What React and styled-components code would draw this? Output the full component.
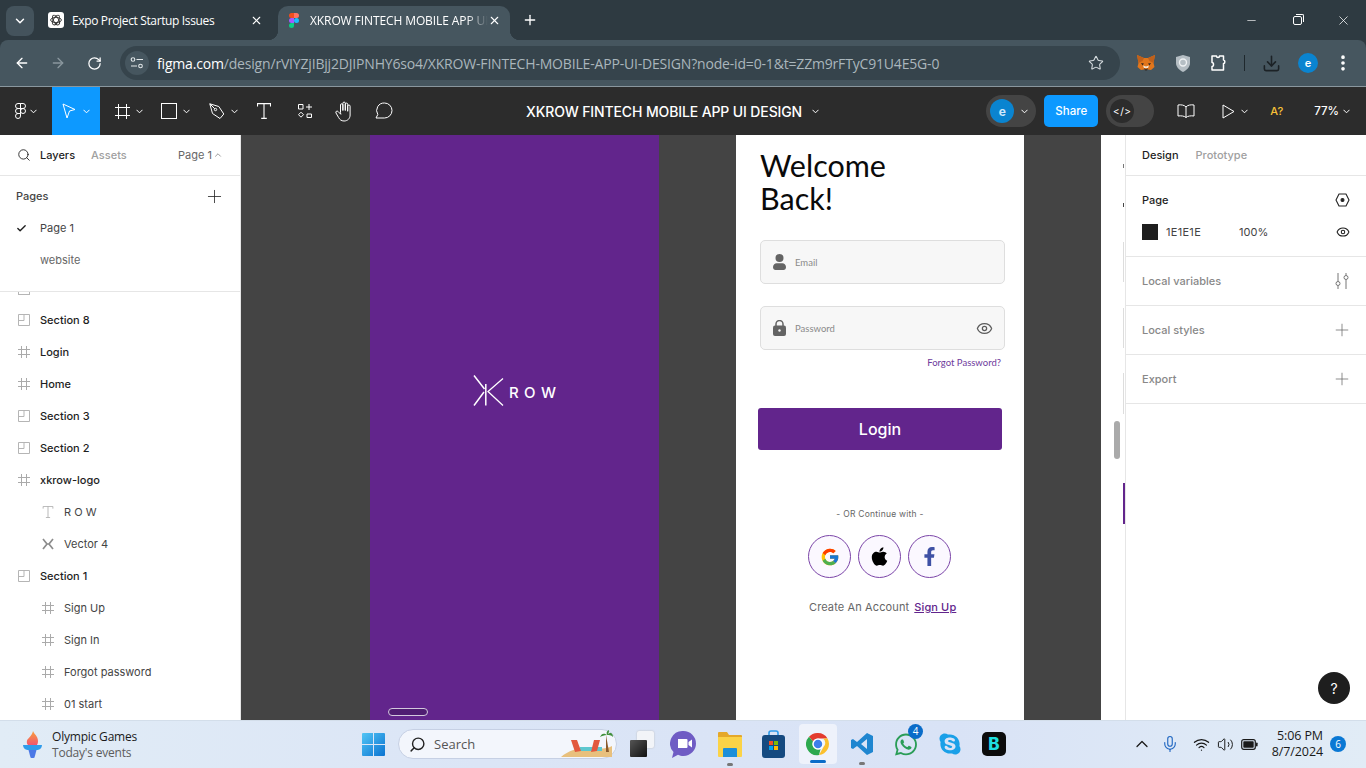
import React from 'react'
import styled, { createGlobalStyle } from 'styled-components'
import { Search, Check, Plus, ChevronDown, ChevronUp, Eye, X, ArrowLeft, ArrowRight, RotateCw, Star, MoreVertical, Download, Minus, Mic, Wifi, Volume2 } from 'lucide-react'
import { FaApple, FaFacebookF, FaWhatsapp, FaSkype } from 'react-icons/fa'
import { FcGoogle } from 'react-icons/fc'

const GlobalStyle = createGlobalStyle`
  html, body { margin: 0; padding: 0; }
  body {
    width: 1366px;
    height: 768px;
    overflow: hidden;
    font-family: Inter, "Liberation Sans", sans-serif;
    background: #2e3a41;
  }
  * { box-sizing: border-box; }
`

const layers = [
  { name: 'Section 8', kind: 'section' },
  { name: 'Login', kind: 'frame' },
  { name: 'Home', kind: 'frame' },
  { name: 'Section 3', kind: 'section' },
  { name: 'Section 2', kind: 'section' },
  { name: 'xkrow-logo', kind: 'frame' },
  { name: 'R O W', kind: 'text', child: true },
  { name: 'Vector 4', kind: 'vector', child: true },
  { name: 'Section 1', kind: 'section' },
  { name: 'Sign Up', kind: 'frame', child: true },
  { name: 'Sign In', kind: 'frame', child: true },
  { name: 'Forgot password', kind: 'frame', child: true },
  { name: '01 start', kind: 'frame', child: true },
]

const FrameGlyph = ({ size = 12, color = '#aaa' }) => (
  <svg width={size} height={size} viewBox="0 0 12 12" fill="none" stroke={color}>
    <path d="M3.5 0v12M8.5 0v12M0 3.5h12M0 8.5h12" />
  </svg>
)

const SectionGlyph = () => (
  <svg width="12" height="12" viewBox="0 0 12 12" fill="none" stroke="#b5b5b5">
    <path d="M.5.5h11v11H.5zM.5 6.5h5.500V.5" />
  </svg>
)

const VectorGlyph = () => (
  <svg width="12" height="12" viewBox="0 0 12 12" fill="none" stroke="#8c8c8c" strokeWidth="1.700">
    <path d="M1 1l4 5-4 5M4.500 6h3M11 1L7 6l4 5" />
  </svg>
)

const TextGlyph = ({ width = 12, height = 12, color = '#aaa' }) => (
  <svg width={width} height={height} viewBox="0 0 14 16" fill="none" stroke={color} strokeWidth="1.100">
    <path d="M.5 3.500V.6h13v2.900M7 .6v14.800M4.200 15.400h5.600" />
  </svg>
)

const LayerIcon = ({ kind }) => {
  if (kind === 'section') return <SectionGlyph />
  if (kind === 'vector') return <VectorGlyph />
  if (kind === 'text') return <TextGlyph />
  return <FrameGlyph />
}

const FigmaMark = () => (
  <svg width="10" height="15" viewBox="0 0 10 15">
    <path d="M5 0H2.5a2.5 2.5 0 0 0 0 5H5z" fill="#f24e1e" />
    <path d="M5 0h2.5a2.5 2.5 0 0 1 0 5H5z" fill="#ff7262" />
    <path d="M5 5H2.5a2.5 2.5 0 0 0 0 5H5z" fill="#a259ff" />
    <circle cx="7.5" cy="7.5" r="2.5" fill="#1abcfe" />
    <path d="M2.5 10H5v2.5a2.5 2.5 0 1 1-2.5-2.5z" fill="#0acf83" />
  </svg>
)

const GptMark = () => (
  <GptTile>
    <svg width="12" height="12" viewBox="0 0 12 12" fill="none" stroke="#333" strokeWidth=".9">
      <ellipse cx="6" cy="6" rx="5.4" ry="2.6" />
      <ellipse cx="6" cy="6" rx="5.4" ry="2.6" transform="rotate(60 6 6)" />
      <ellipse cx="6" cy="6" rx="5.4" ry="2.6" transform="rotate(120 6 6)" />
    </svg>
  </GptTile>
)

const Fox = () => (
  <svg width="18" height="18" viewBox="0 0 18 18">
    <path d="M0 1l7 3h4l7-3-1.500 8 1 4-3.500 3-3-.5H7l-3 .5L.5 13l1-4z" fill="#e2761b" />
    <path d="M0 1l7 3-1.500 3L1.500 9zM18 1l-7 3 1.500 3 4 2z" fill="#c0601a" />
    <path d="M4 9l3 .5-1.500 2zM14 9l-3 .5 1.500 2z" fill="#3a2a20" />
    <path d="M7 14l2 1.500 2-1.500-1 2.500H8z" fill="#332a26" />
    <path d="M6 11.500l1 2.500h4l1-2.500-3 1z" fill="#f5e6d4" />
  </svg>
)

const Shield = () => (
  <svg width="14" height="17" viewBox="0 0 14 17">
    <path d="M7 0l7 2v6c0 4-3 7-7 9-4-2-7-5-7-9V2z" fill="#b5bec4" />
    <circle cx="7" cy="7.500" r="3.500" fill="none" stroke="#eef1f3" strokeWidth="1.400" />
  </svg>
)

const Puzzle = () => (
  <svg width="16" height="16" viewBox="0 0 16 16" fill="none" stroke="#fff" strokeWidth="1.500">
    <path d="M1 1h4.500c0 2 3 2 3 0H12.500v4c1.800 0 1.800 3.500 0 3.500V15H1v-3.500c2 0 2-4 0-4z" strokeLinejoin="round" />
  </svg>
)

const TuneGlyph = () => (
  <svg width="14" height="14" viewBox="0 0 14 14" fill="none" stroke="#e3e8ea" strokeWidth="1.100">
    <circle cx="3" cy="3.500" r="1.800" />
    <path d="M6.500 3.500H13M1 10h6" />
    <circle cx="10.500" cy="10" r="1.800" />
  </svg>
)

const FigmaOutline = () => (
  <svg width="11" height="16" viewBox="0 0 11 16" fill="none" stroke="#fff">
    <path d="M5.500.5H3a2.500 2.500 0 0 0 0 5h2.500zM5.500.5H8a2.500 2.500 0 0 1 0 5H5.500zM5.500 5.500H3a2.500 2.500 0 0 0 0 5h2.500z" />
    <circle cx="8" cy="8" r="2.500" />
    <path d="M3 10.500h2.500V13A2.500 2.500 0 1 1 3 10.500z" />
  </svg>
)

const CursorGlyph = () => (
  <svg width="14" height="16" viewBox="0 0 14 16" fill="none" stroke="#fff" strokeLinejoin="round">
    <path d="M1 1l12 5.500-5.500 1.500L5 15z" />
  </svg>
)

const FrameTool = () => (
  <svg width="15" height="15" viewBox="0 0 15 15" fill="none" stroke="#fff">
    <path d="M3.500 0v15M11.500 0v15M0 3.500h15M0 11.500h15" />
  </svg>
)

const PenTool = () => (
  <svg width="16" height="17" viewBox="0 0 16 17" fill="none" stroke="#fff" strokeLinejoin="round">
    <path d="M.8.800l9 2.700 5 7.500-3.800 4.500-7.500-5z" />
    <path d="M.8.800l5 5" />
    <circle cx="6.500" cy="6.500" r="1.200" />
  </svg>
)

const WidgetsTool = () => (
  <svg width="14" height="14" viewBox="0 0 14 14" fill="none" stroke="#fff">
    <path d="M.5.500h4.500V5H.5zM9 10h4.500v3.500H9zM3 8.200l2.500 2.500L3 13.200.5 10.700zM11 0v6M8 3h6" />
  </svg>
)

const HandTool = () => (
  <svg width="18" height="21" viewBox="0 0 18 21" fill="none" stroke="#fff" strokeLinecap="round" strokeLinejoin="round">
    <path d="M5.500 11V4a1.200 1.200 0 0 1 2.400 0v5.500V2.300a1.200 1.200 0 0 1 2.400 0v7.200V3.300a1.200 1.200 0 0 1 2.400 0v7V5.200a1.200 1.200 0 0 1 2.400 0V14c0 3.500-2.500 6-6 6-3 0-4.300-1.500-5.500-3.500L1 12c-.8-1.500 1-2.600 2.200-1.400L5.500 13z" />
  </svg>
)

const CommentTool = () => (
  <svg width="18" height="18" viewBox="0 0 18 18" fill="none" stroke="#fff">
    <path d="M9.500 1a7.500 7.500 0 0 1 0 15H1l1.800-3.500A7.500 7.500 0 0 1 9.500 1z" strokeLinejoin="round" />
  </svg>
)

const BookTool = () => (
  <svg width="18" height="14" viewBox="0 0 18 14" fill="none" stroke="#fff">
    <path d="M9 3C7.500 1 4 .5 1 1v11c3-.5 6.500 0 8 1.500 1.500-1.500 5-2 8-1.500V1c-3-.5-6.500 0-8 2zM9 3v10.500" strokeLinejoin="round" />
  </svg>
)

const PlayTool = () => (
  <svg width="13" height="15" viewBox="0 0 13 15" fill="none" stroke="#fff" strokeLinejoin="round">
    <path d="M1 1l11 6.500L1 14z" />
  </svg>
)

const HexGlyph = () => (
  <svg width="15" height="14" viewBox="0 0 15 14" fill="none" stroke="#222" strokeWidth="1.100">
    <path d="M4 1h7l3 6-3 6H4L1 7z" strokeLinejoin="round" />
    <circle cx="7.500" cy="7" r="1.500" fill="#222" />
  </svg>
)

const SlidersGlyph = () => (
  <svg width="14" height="16" viewBox="0 0 14 16" fill="none" stroke="#777">
    <circle cx="3" cy="10.500" r="2" />
    <circle cx="11" cy="4.500" r="2" />
    <path d="M3 0v8.500M3 12.500V16M11 0v2.500M11 6.500V16" />
  </svg>
)

const UserGlyph = () => (
  <svg width="13" height="16" viewBox="0 0 13 16" fill="#646464">
    <circle cx="6.500" cy="4" r="4" />
    <path d="M0 13c0-2.500 2-3.800 3.500-3.800h6c1.500 0 3.500 1.300 3.500 3.800 0 2-1 3-2.500 3h-8C1 16 0 15 0 13z" />
  </svg>
)

const LockGlyph = () => (
  <svg width="13" height="16" viewBox="0 0 13 16">
    <path d="M3 6V4a3.500 3.500 0 0 1 7 0v2" fill="none" stroke="#646464" strokeWidth="1.500" />
    <rect y="5.500" width="13" height="10.500" rx="2" fill="#646464" />
    <circle cx="6.500" cy="10.500" r="1.200" fill="#f7f7f7" />
  </svg>
)

const Logo = () => (
  <svg width="31" height="31" viewBox="0 0 31 31" fill="none" stroke="#fff" strokeWidth="1.500">
    <path d="M1 .5l10.500 13.500M1 30.500l10-13.500M12.800 9v21.500" />
    <path d="M30 3.500L15 16.500l15 14" strokeWidth="1.300" />
  </svg>
)

const StartGlyph = () => (
  <svg width="23" height="23" viewBox="0 0 23 23">
    <defs>
      <linearGradient id="winGrad" x1="0" y1="0" x2="1" y2="1">
        <stop offset="0" stopColor="#52c5f5" />
        <stop offset="1" stopColor="#0a73d1" />
      </linearGradient>
    </defs>
    <path d="M0 1a1 1 0 0 1 1-1h10v11H0zM12 0h10a1 1 0 0 1 1 1v10H12zM0 12h11v11H1a1 1 0 0 1-1-1zM12 12h11v10a1 1 0 0 1-1 1H12z" fill="url(#winGrad)" />
  </svg>
)

const Torch = () => (
  <svg width="19" height="27" viewBox="0 0 19 27">
    <defs>
      <linearGradient id="flame" x1="0" y1="0" x2="0" y2="1">
        <stop offset="0" stopColor="#f9a03a" />
        <stop offset="1" stopColor="#f1566f" />
      </linearGradient>
    </defs>
    <path d="M10 0c1 3 5 5 5 10 0 2-.5 3-1 4H5c-1-1-1.500-2.500-1-4.500C5 7 9 5 10 0z" fill="url(#flame)" />
    <path d="M0 14h19c0 3-2 4.500-4.500 5H4.500C2 18.500 0 17 0 14z" fill="#2f9ceb" />
    <path d="M5.500 19h8l-2 7.500c-.5.800-3.500.800-4 0z" fill="#4a78e6" />
  </svg>
)

const BeachArt = () => (
  <svg width="52" height="28" viewBox="0 0 52 28">
    <path d="M0 27C8 20 20 17 30 18c8 1 16 1 21-2v11z" fill="#e8c07d" />
    <path d="M19 17h22v4H19z" fill="#5cc7cf" />
    <path d="M10 10l6 0 4 11-6 1z" fill="#e2583e" />
    <path d="M33 10l6 0-3 11-6 1z" fill="#e2583e" />
    <path d="M45 5l3 17h-3z" fill="#8a5a2c" />
    <path d="M46 5c-4-3-6 0-7 2 2-1 4-2 7-2zM46 5c4-4 6-1 6 2-2-2-4-2-6-2zM46 5c-1-3 0-4 2-5 0 2 0 3-2 5z" fill="#3f8f3a" />
  </svg>
)

const TaskView = () => (
  <TaskViewStack>
    <TaskViewBack />
    <TaskViewFront />
  </TaskViewStack>
)

const MeetGlyph = () => (
  <svg width="27" height="29" viewBox="0 0 27 29">
    <path d="M13.500 1a12.500 12.500 0 0 1 0 25c-2 0-4-.5-5.500-1.300L2 28l1.500-6A12.500 12.500 0 0 1 13.500 1z" fill="#6f5cc4" />
    <path d="M8 9h8.500a1 1 0 0 1 1 1v7a1 1 0 0 1-1 1H8zM18.500 12l3.500-2.500v8L18.500 15z" fill="#fff" />
  </svg>
)

const FolderGlyph = () => (
  <svg width="24" height="26" viewBox="0 0 24 26">
    <path d="M0 2a1 1 0 0 1 1-1h8l2 3h12a1 1 0 0 1 1 1v3H0z" fill="#e5a82a" />
    <path d="M0 6h24v19a1 1 0 0 1-1 1H1a1 1 0 0 1-1-1z" fill="#fbd347" />
    <path d="M6 17h12a1 1 0 0 1 1 1v8H5v-8a1 1 0 0 1 1-1z" fill="#1d8fd8" />
  </svg>
)

const StoreGlyph = () => (
  <svg width="23" height="28" viewBox="0 0 23 28">
    <path d="M7 6V3a2 2 0 0 1 2-2h5a2 2 0 0 1 2 2v3" fill="none" stroke="#2f9ceb" strokeWidth="1.600" />
    <rect y="5" width="23" height="23" rx="3" fill="#154a80" />
    <path d="M7 11h4v4H7z" fill="#f25022" />
    <path d="M12 11h4v4h-4z" fill="#7fba00" />
    <path d="M7 16h4v4H7z" fill="#00a4ef" />
    <path d="M12 16h4v4h-4z" fill="#ffb900" />
  </svg>
)

const ChromeGlyph = () => (
  <svg width="24" height="24" viewBox="0 0 48 48">
    <path d="M24 2a22 22 0 0 1 19 11H24a11 11 0 0 0-10 6L6 9.500A22 22 0 0 1 24 2z" fill="#e33b2e" />
    <path d="M43 13a22 22 0 0 1-17 33l9-16a11 11 0 0 0-1-17z" fill="#fbc02d" />
    <path d="M6 9.500L14 19a11 11 0 0 0 10 16c2 0 3-.2 5-1l-3 12A22 22 0 0 1 6 9.500z" fill="#2da94f" />
    <circle cx="24" cy="24" r="11" fill="#fff" />
    <circle cx="24" cy="24" r="8.500" fill="#3d7fea" />
  </svg>
)

const CodeGlyph = () => (
  <svg width="24" height="24" viewBox="0 0 24 24">
    <path d="M17 1l6 3v16l-6 3L7 14l-4 3-2-1V8l2-1 4 3zM17 7l-6 5 6 5z" fill="#1f86d0" fillRule="evenodd" />
  </svg>
)

const BatteryGlyph = () => (
  <svg width="17" height="11" viewBox="0 0 17 11">
    <rect x=".7" y=".7" width="13.600" height="9.600" rx="2" fill="none" stroke="#1a1a1a" strokeWidth="1.200" />
    <rect x="2.300" y="2.300" width="10.400" height="6.400" rx=".8" fill="#1a1a1a" />
    <rect x="15" y="3.500" width="1.600" height="4" rx=".8" fill="#1a1a1a" />
  </svg>
)

const App = () => {
  return (
    <Page>
      <GlobalStyle />
      <TabStrip>
        <ListButton><ChevronDown size={14} color="#fff" strokeWidth={2.500} /></ListButton>
        <Tab $w={244} $pl={14} $pr={15}>
          <GptMark />
          <TabTitle $ml={8} $ls={-0.36}>Expo Project Startup Issues</TabTitle>
          <X size={13} color="#fff" strokeWidth={2} />
        </Tab>
        <Tab $w={232} $pl={11} $pr={9} $active>
          <FigmaMark />
          <TabTitle $ml={11} $ls={-0.1} $fade>XKROW FINTECH MOBILE APP UI DESIGN</TabTitle>
          <X size={13} color="#fff" strokeWidth={2} />
        </Tab>
        <NewTab><Plus size={16} color="#fff" strokeWidth={2} /></NewTab>
        <WindowControls>
          <WindowButton><Minus size={13} color="#fff" strokeWidth={1.200} /></WindowButton>
          <WindowButton><RestoreBox /></WindowButton>
          <WindowButton><X size={15} color="#fff" strokeWidth={1.200} /></WindowButton>
        </WindowControls>
      </TabStrip>

      <BrowserBar>
        <NavButton><ArrowLeft size={16} color="#fff" strokeWidth={2} /></NavButton>
        <NavButton><ArrowRight size={16} color="#8a979e" strokeWidth={2} /></NavButton>
        <NavButton><RotateCw size={15} color="#fff" strokeWidth={2} /></NavButton>
        <Omnibox>
          <SiteChip><TuneGlyph /></SiteChip>
          <Url><strong>figma.com</strong>/design/rVIYZjIBjj2DJIPNHY6so4/XKROW-FINTECH-MOBILE-APP-UI-DESIGN?node-id=0-1&amp;t=ZZm9rFTyC91U4E5G-0</Url>
          <Star size={16} color="#d5dbde" strokeWidth={1.600} />
        </Omnibox>
        <BarSlot $ml={17}><Fox /></BarSlot>
        <BarSlot $ml={21}><Shield /></BarSlot>
        <BarSlot $ml={21}><Puzzle /></BarSlot>
        <BarDivider />
        <BarSlot $ml={17}><Download size={19} color="#1c2226" strokeWidth={2} /></BarSlot>
        <ProfileDot>e</ProfileDot>
        <BarSlot $ml={15}><MoreVertical size={20} color="#fff" strokeWidth={2.400} /></BarSlot>
      </BrowserBar>

      <FigmaBar>
        <ToolSlot $w={52} $center>
          <FigmaOutline />
          <SmallChevron />
        </ToolSlot>
        <ToolSlot $w={48} $center $active>
          <CursorGlyph />
          <SmallChevron ml={7} />
        </ToolSlot>
        <ToolSlot $ml={15}><FrameTool /><SmallChevron ml={6} /></ToolSlot>
        <ToolSlot $ml={18}><RectTool /><SmallChevron ml={6} /></ToolSlot>
        <ToolSlot $ml={19}><PenTool /><SmallChevron ml={6} /></ToolSlot>
        <ToolSlot $ml={19}><TextGlyph width={14} height={16} color="#fff" /></ToolSlot>
        <ToolSlot $ml={27}><WidgetsTool /></ToolSlot>
        <ToolSlot $ml={23}><HandTool /></ToolSlot>
        <ToolSlot $ml={22}><CommentTool /></ToolSlot>
        <FileTitle>XKROW FINTECH MOBILE APP UI DESIGN</FileTitle>
        <SmallChevron ml={10} />
        <BarRight>
          <AvatarPill>
            <FigmaAvatar>e</FigmaAvatar>
            <SmallChevron ml={7} />
          </AvatarPill>
          <ShareButton>Share</ShareButton>
          <DevToggle>
            <DevKnob>&lt;/&gt;</DevKnob>
          </DevToggle>
          <ToolSlot $ml={23}><BookTool /></ToolSlot>
          <ToolSlot $ml={27}><PlayTool /><SmallChevron ml={6} /></ToolSlot>
          <MissingFonts>A?</MissingFonts>
          <ZoomLabel>77%</ZoomLabel>
          <SmallChevron />
        </BarRight>
      </FigmaBar>

      <Workspace>
        <LeftPanel>
          <PanelTabs>
            <Search size={14} color="#1e1e1e" strokeWidth={1.500} />
            <PanelTab $active $ml={9}>Layers</PanelTab>
            <PanelTab $ml={16}>Assets</PanelTab>
            <PageSwitch>Page 1 <ChevronUp size={10} color="#888" /></PageSwitch>
          </PanelTabs>
          <PagesBlock>
            <PagesHead>
              <span>Pages</span>
              <WidePlus size={21} color="#1e1e1e" strokeWidth={0.900} />
            </PagesHead>
            <PageRow>
              <CheckSlot><Check size={11} color="#1e1e1e" strokeWidth={3} /></CheckSlot>
              Page 1
            </PageRow>
            <PageRow $muted><CheckSlot />website</PageRow>
          </PagesBlock>
          <LayerPeek />
          {layers.map((layer) => (
            <LayerRow key={layer.name} $child={layer.child}>
              <LayerIconBox><LayerIcon kind={layer.kind} /></LayerIconBox>
              <LayerName $child={layer.child}>{layer.name}</LayerName>
            </LayerRow>
          ))}
        </LeftPanel>

        <Canvas>
          <SplashFrame>
            <LogoRow>
              <Logo />
              <LogoText>ROW</LogoText>
            </LogoRow>
            <HomePill />
          </SplashFrame>

          <LoginFrame>
            <Heading>Welcome<br />Back!</Heading>
            <Field>
              <UserGlyph />
              <FieldLabel>Email</FieldLabel>
            </Field>
            <Field $mt={22}>
              <LockGlyph />
              <FieldLabel>Password</FieldLabel>
              <FieldEye><Eye size={17} color="#5c5c5c" strokeWidth={1.800} /></FieldEye>
            </Field>
            <ForgotLink>Forgot Password?</ForgotLink>
            <LoginButton>Login</LoginButton>
            <OrLine>- OR Continue with -</OrLine>
            <SocialRow>
              <SocialCircle><FcGoogle size={20} /></SocialCircle>
              <SocialCircle><FaApple size={21} color="#000" /></SocialCircle>
              <SocialCircle><FaFacebookF size={19} color="#3f51a5" /></SocialCircle>
            </SocialRow>
            <SignUpRow>
              Create An Account
              <SignUpLink>Sign Up</SignUpLink>
            </SignUpRow>
          </LoginFrame>

          <NextFrame>
            <Sliver $top={29} $h={4} $color="#777" />
            <Sliver $top={68} $h={4} $color="#444" />
            <Sliver $top={107} $h={40} $color="#ddd" />
            <Sliver $top={173} $h={40} $color="#ddd" />
            <Sliver $top={238} $h={41} $color="#ddd" />
            <Sliver $top={348} $h={41} $color="#62258c" $thick />
            <CanvasScroll />
          </NextFrame>
        </Canvas>

        <RightPanel>
          <PanelTabs $right>
            <PanelTab $active>Design</PanelTab>
            <PanelTab $ml={17}>Prototype</PanelTab>
          </PanelTabs>
          <PageProps>
            <PropHead>
              <strong>Page</strong>
              <HexGlyph />
            </PropHead>
            <FillRow>
              <Swatch />
              <FillHex>1E1E1E</FillHex>
              <FillOpacity>100%</FillOpacity>
              <FillEye><Eye size={14} color="#1e1e1e" strokeWidth={1.800} /></FillEye>
            </FillRow>
          </PageProps>
          <PropSection>Local variables<SlidersGlyph /></PropSection>
          <PropSection>Local styles<WidePlus size={20} color="#666" strokeWidth={0.900} /></PropSection>
          <PropSection>Export<WidePlus size={20} color="#666" strokeWidth={0.900} /></PropSection>
          <HelpButton>?</HelpButton>
        </RightPanel>
      </Workspace>

      <Taskbar>
        <Weather>
          <Torch />
          <WeatherText>
            <strong>Olympic Games</strong>
            <span>Today&apos;s events</span>
          </WeatherText>
        </Weather>
        <TaskCenter>
          <StartGlyph />
          <SearchBox>
            <MirroredSearch size={17} color="#222" strokeWidth={2} />
            <SearchLabel>Search</SearchLabel>
            <BeachArt />
          </SearchBox>
          <TaskIcon $w={24} $ml={13}><TaskView /></TaskIcon>
          <TaskIcon $w={27} $ml={16}><MeetGlyph /></TaskIcon>
          <TaskIcon $w={24} $ml={21} $dot><FolderGlyph /></TaskIcon>
          <TaskIcon $w={23} $ml={20}><StoreGlyph /></TaskIcon>
          <ActiveTile><ChromeGlyph /><ActiveBar /></ActiveTile>
          <TaskIcon $w={24} $ml={13} $dot><CodeGlyph /></TaskIcon>
          <TaskIcon $w={24} $ml={20}>
            <FaWhatsapp size={25} color="#2a9d57" />
            <CountBadge>4</CountBadge>
          </TaskIcon>
          <TaskIcon $w={22} $ml={21}><FaSkype size={24} color="#1aa0e8" /></TaskIcon>
          <TaskIcon $w={24} $ml={21}><BTile>B</BTile></TaskIcon>
        </TaskCenter>
        <Tray>
          <ChevronUp size={20} color="#1a1a1a" strokeWidth={1.500} />
          <TrayIcon $ml={9}><Mic size={18} color="#1f66c1" strokeWidth={1.500} /></TrayIcon>
          <TrayIcon $ml={14}><Wifi size={17} color="#1a1a1a" strokeWidth={1.700} /></TrayIcon>
          <TrayIcon $ml={7}><Volume2 size={17} color="#1a1a1a" strokeWidth={1.400} /></TrayIcon>
          <TrayIcon $ml={7}><BatteryGlyph /></TrayIcon>
          <Clock>
            <span>5:06 PM</span>
            <span>8/7/2024</span>
          </Clock>
          <NotifyBadge>6</NotifyBadge>
        </Tray>
      </Taskbar>
    </Page>
  )
}

export default App

const Page = styled.div`
  width: 1366px;
  height: 768px;
  display: flex;
  flex-direction: column;
  overflow: hidden;
`

const TabStrip = styled.div`
  height: 40px;
  display: flex;
  align-items: flex-end;
  padding-left: 6px;
  background: #2e3a41;
`
const ListButton = styled.div`
  width: 28px;
  height: 30px;
  margin-bottom: 4px;
  display: flex;
  align-items: center;
  justify-content: center;
  border-radius: 8px;
  background: #44535c;
`
const Tab = styled.div`
  position: relative;
  width: ${(p) => p.$w}px;
  height: 34px;
  display: flex;
  align-items: center;
  padding: 0 ${(p) => p.$pr}px 6px ${(p) => p.$pl}px;
  border-radius: 10px 10px 0 0;
  color: #fff;
  background: ${(p) => (p.$active ? '#46565f' : 'transparent')};
  ${(p) => p.$active && `
    &::before, &::after {
      content: '';
      position: absolute;
      bottom: 0;
      width: 10px;
      height: 10px;
    }
    &::before {
      left: -10px;
      background: radial-gradient(circle at 0 0, transparent 10px, #46565f 10.5px);
    }
    &::after {
      right: -10px;
      background: radial-gradient(circle at 100% 0, transparent 10px, #46565f 10.5px);
    }
  `}
`
const GptTile = styled.div`
  width: 16px;
  height: 16px;
  display: flex;
  align-items: center;
  justify-content: center;
  border-radius: 3px;
  background: #fff;
`
const TabTitle = styled.div`
  flex: 1;
  margin-left: ${(p) => p.$ml}px;
  overflow: hidden;
  white-space: nowrap;
  font-family: "Open Sans", sans-serif;
  font-size: 12px;
  letter-spacing: ${(p) => p.$ls}px;
  ${(p) => p.$fade && 'mask-image: linear-gradient(90deg, #000 88%, transparent 100%);'}
`
const NewTab = styled.div`
  margin: 0 0 12px 12px;
  display: flex;
`
const WindowControls = styled.div`
  display: flex;
  margin-left: auto;
  align-self: flex-start;
`
const WindowButton = styled.div`
  width: 46px;
  height: 40px;
  display: flex;
  align-items: center;
  justify-content: center;
`
const RestoreBox = styled.div`
  position: relative;
  width: 9px;
  height: 9px;
  border: 1px solid #fff;
  border-radius: 2px;
  &::after {
    content: '';
    position: absolute;
    top: -3px;
    right: -3px;
    width: 7px;
    height: 7px;
    border-top: 1px solid #fff;
    border-right: 1px solid #fff;
    border-radius: 0 2px 0 0;
  }
`

const BrowserBar = styled.div`
  height: 47px;
  display: flex;
  align-items: center;
  padding-left: 4px;
  background: #46565f;
  border-bottom: 1px solid #8a979e;
  border-radius: 8px 8px 0 0;
`
const NavButton = styled.div`
  width: 36px;
  display: flex;
  justify-content: center;
`
const Omnibox = styled.div`
  width: 1000px;
  height: 34px;
  margin-left: 8px;
  display: flex;
  align-items: center;
  padding: 0 16px 0 5px;
  border-radius: 17px;
  background: #36444c;
`
const SiteChip = styled.div`
  width: 24px;
  height: 24px;
  display: flex;
  align-items: center;
  justify-content: center;
  border-radius: 50%;
  background: #46565f;
`
const Url = styled.div`
  flex: 1;
  margin-left: 8px;
  white-space: nowrap;
  font-family: "Open Sans", sans-serif;
  font-size: 14px;
  letter-spacing: -0.18px;
  color: #aab6bc;
  strong {
    font-weight: 400;
    color: #fff;
  }
`
const BarSlot = styled.div`
  margin-left: ${(p) => p.$ml}px;
  display: flex;
  align-items: center;
`
const BarDivider = styled.div`
  width: 1px;
  height: 16px;
  margin-left: 17px;
  background: #1f282d;
`
const ProfileDot = styled.div`
  width: 20px;
  height: 20px;
  margin-left: 17px;
  display: flex;
  align-items: center;
  justify-content: center;
  border-radius: 50%;
  font-size: 11px;
  font-weight: 600;
  color: #fff;
  background: #0a84d0;
`

const FigmaBar = styled.div`
  height: 48px;
  display: flex;
  align-items: center;
  color: #fff;
  background: #2c2c2c;
`
const ToolSlot = styled.div`
  width: ${(p) => (p.$w ? `${p.$w}px` : 'auto')};
  height: ${(p) => (p.$w ? '48px' : 'auto')};
  margin-left: ${(p) => p.$ml || 0}px;
  display: flex;
  align-items: center;
  justify-content: ${(p) => (p.$center ? 'center' : 'flex-start')};
  background: ${(p) => (p.$active ? '#0d99ff' : 'transparent')};
`
const ChevronBox = styled.span`
  display: inline-flex;
  margin-left: ${(p) => p.$ml}px;
`
const SmallChevron = ({ ml = 4 }) => (
  <ChevronBox $ml={ml}>
    <svg width="7" height="5" viewBox="0 0 7 5" fill="none" stroke="#fff">
      <path d="M.5.800l3 3 3-3" />
    </svg>
  </ChevronBox>
)
const RectTool = styled.div`
  width: 16px;
  height: 16px;
  border: 1px solid #fff;
`
const FileTitle = styled.div`
  margin: 0 0 0 133px;
  font-size: 14px;
  font-weight: 500;
  letter-spacing: -0.12px;
  white-space: nowrap;
`
const BarRight = styled.div`
  display: flex;
  align-items: center;
  margin-left: auto;
  padding-right: 16px;
`
const AvatarPill = styled.div`
  width: 50px;
  height: 32px;
  display: flex;
  align-items: center;
  padding-left: 4px;
  border-radius: 16px;
  background: #444;
`
const FigmaAvatar = styled.div`
  width: 24px;
  height: 24px;
  display: flex;
  align-items: center;
  justify-content: center;
  border-radius: 50%;
  font-size: 12px;
  font-weight: 700;
  color: #cfe9fb;
  background: #0a84d0;
`
const ShareButton = styled.div`
  width: 54px;
  height: 32px;
  margin-left: 8px;
  display: flex;
  align-items: center;
  justify-content: center;
  border-radius: 5px;
  font-size: 11.500px;
  font-weight: 500;
  background: #0d99ff;
`
const DevToggle = styled.div`
  width: 48px;
  height: 32px;
  margin-left: 8px;
  display: flex;
  align-items: center;
  padding-left: 4px;
  border-radius: 16px;
  background: #444;
`
const DevKnob = styled.div`
  width: 24px;
  height: 24px;
  display: flex;
  align-items: center;
  justify-content: center;
  border-radius: 50%;
  font-size: 10px;
  letter-spacing: 0.5px;
  background: #2c2c2c;
`
const MissingFonts = styled.div`
  margin-left: 22px;
  font-size: 11px;
  font-weight: 500;
  color: #f7c137;
`
const ZoomLabel = styled.div`
  margin-left: 31px;
  font-size: 11.500px;
  font-weight: 500;
`

const Workspace = styled.div`
  height: 585px;
  display: flex;
  overflow: hidden;
`
const LeftPanel = styled.div`
  width: 241px;
  flex: none;
  overflow: hidden;
  background: #fff;
  border-right: 1px solid #e6e6e6;
`
const PanelTabs = styled.div`
  height: 41px;
  display: flex;
  align-items: center;
  padding-left: ${(p) => (p.$right ? 16 : 17)}px;
  border-bottom: 1px solid #e6e6e6;
`
const PanelTab = styled.div`
  margin-left: ${(p) => p.$ml || 0}px;
  font-size: 11px;
  font-weight: 500;
  color: ${(p) => (p.$active ? '#1e1e1e' : '#a0a0a0')};
`
const PageSwitch = styled.div`
  display: flex;
  align-items: center;
  gap: 1px;
  margin-left: auto;
  padding-right: 17px;
  font-size: 11px;
  color: #666;
`
const PagesBlock = styled.div`
  height: 116px;
  border-bottom: 1px solid #e6e6e6;
`
const PagesHead = styled.div`
  height: 36px;
  display: flex;
  align-items: center;
  justify-content: space-between;
  padding: 4px 18px 0 16px;
  font-size: 11px;
  font-weight: 500;
  color: #444;
`
const WidePlus = styled(Plus)`
  margin: -3px;
`
const PageRow = styled.div`
  height: 32px;
  display: flex;
  align-items: center;
  font-size: 11px;
  color: ${(p) => (p.$muted ? '#666' : '#444')};
`
const CheckSlot = styled.div`
  width: 40px;
  padding-left: 16px;
  display: flex;
`
const LayerPeek = styled.div`
  width: 12px;
  height: 3px;
  margin: 0 0 9px 18px;
  border: 1px solid #b5b5b5;
  border-top: none;
`
const LayerRow = styled.div`
  height: 32px;
  display: flex;
  align-items: center;
  padding-left: ${(p) => (p.$child ? 42 : 18)}px;
`
const LayerIconBox = styled.div`
  width: 12px;
  display: flex;
  justify-content: center;
`
const LayerName = styled.div`
  margin-left: 10px;
  font-size: 11px;
  font-weight: ${(p) => (p.$child ? 400 : 500)};
  color: ${(p) => (p.$child ? '#444' : '#1e1e1e')};
`

const Canvas = styled.div`
  flex: 1;
  display: flex;
  gap: 77px;
  padding-left: 129px;
  background: #444;
`
const SplashFrame = styled.div`
  width: 289px;
  display: flex;
  flex-direction: column;
  padding: 240px 0 4px 103px;
  background: #62258c;
`
const LogoRow = styled.div`
  display: flex;
  align-items: center;
  gap: 5px;
`
const LogoText = styled.div`
  margin-top: 3px;
  font-size: 15px;
  font-weight: 500;
  letter-spacing: 5.4px;
  color: #fff;
`
const HomePill = styled.div`
  width: 40px;
  height: 8px;
  margin: auto 0 0 -85px;
  border: 1px solid #d3c8dd;
  border-radius: 4px;
  background: #4f1d72;
`
const LoginFrame = styled.div`
  width: 288px;
  display: flex;
  flex-direction: column;
  padding: 14px 0 0 24px;
  background: #fff;
`
const Heading = styled.h1`
  margin: 0 0 25px;
  font-family: Lato, sans-serif;
  font-size: 30.500px;
  font-weight: 400;
  line-height: 33px;
  color: #0a0a0a;
`
const Field = styled.div`
  position: relative;
  width: 245px;
  height: 44px;
  margin-top: ${(p) => p.$mt || 0}px;
  display: flex;
  align-items: center;
  padding-left: 12px;
  border: 1px solid #dedede;
  border-radius: 5px;
  background: #f7f7f7;
`
const FieldLabel = styled.div`
  margin-left: 9px;
  font-family: Lato, sans-serif;
  font-size: 9.500px;
  color: #8a8a8a;
`
const FieldEye = styled.div`
  margin-left: auto;
  padding-right: 11px;
  display: flex;
`
const ForgotLink = styled.div`
  width: 241px;
  margin-top: 7px;
  text-align: right;
  font-family: Lato, sans-serif;
  font-size: 9.500px;
  line-height: 12px;
  color: #6e3a9c;
`
const LoginButton = styled.div`
  width: 244px;
  height: 42px;
  margin: 39px 0 0 -2px;
  display: flex;
  align-items: center;
  justify-content: center;
  border-radius: 3px;
  font-size: 16px;
  font-weight: 500;
  color: #fff;
  background: #62258c;
`
const OrLine = styled.div`
  width: 240px;
  margin-top: 58px;
  text-align: center;
  font-size: 8.500px;
  letter-spacing: 0.25px;
  line-height: 12px;
  color: #666;
`
const SocialRow = styled.div`
  width: 239px;
  margin-top: 15px;
  display: flex;
  justify-content: center;
  gap: 7px;
`
const SocialCircle = styled.div`
  width: 43px;
  height: 43px;
  display: flex;
  align-items: center;
  justify-content: center;
  border: 1px solid #7b45a8;
  border-radius: 50%;
  background: #fbf8ff;
`
const SignUpRow = styled.div`
  margin: 22px 0 0 49px;
  display: flex;
  gap: 5px;
  font-size: 11px;
  letter-spacing: 0.12px;
  line-height: 14px;
  white-space: nowrap;
  color: #666;
`
const SignUpLink = styled.span`
  font-weight: 500;
  color: #62258c;
  text-decoration: underline;
`
const NextFrame = styled.div`
  position: relative;
  flex: 1;
  background: #fff;
`
const Sliver = styled.div`
  position: absolute;
  right: 0;
  top: ${(p) => p.$top}px;
  width: 2px;
  height: ${(p) => p.$h}px;
  border-left: ${(p) => (p.$thick ? 2 : 1)}px solid ${(p) => p.$color};
`
const CanvasScroll = styled.div`
  position: absolute;
  left: 13px;
  top: 286px;
  width: 6px;
  height: 38px;
  border-radius: 3px;
  background: #aaa;
`

const RightPanel = styled.div`
  position: relative;
  width: 241px;
  flex: none;
  background: #fff;
  border-left: 1px solid #e6e6e6;
`
const PageProps = styled.div`
  height: 81px;
  padding: 0 16px;
  border-bottom: 1px solid #e6e6e6;
`
const PropHead = styled.div`
  height: 48px;
  display: flex;
  align-items: center;
  justify-content: space-between;
  font-size: 11px;
  strong { font-weight: 500; color: #1e1e1e; }
`
const FillRow = styled.div`
  display: flex;
  align-items: center;
  font-size: 11px;
  color: #444;
`
const Swatch = styled.div`
  width: 16px;
  height: 16px;
  background: #1e1e1e;
`
const FillHex = styled.div`
  margin-left: 8px;
  letter-spacing: 0.3px;
`
const FillOpacity = styled.div`
  margin-left: 38px;
`
const FillEye = styled.div`
  margin-left: auto;
  display: flex;
`
const PropSection = styled.div`
  height: 49px;
  display: flex;
  align-items: center;
  justify-content: space-between;
  padding: 0 17px 0 16px;
  border-bottom: 1px solid #e6e6e6;
  font-size: 11px;
  font-weight: 500;
  color: #888;
`
const HelpButton = styled.div`
  position: absolute;
  right: 16px;
  bottom: 16px;
  width: 32px;
  height: 32px;
  display: flex;
  align-items: center;
  justify-content: center;
  border-radius: 50%;
  font-size: 14px;
  color: #fff;
  background: #1e1e1e;
`

const Taskbar = styled.div`
  height: 48px;
  display: flex;
  align-items: center;
  box-shadow: inset 0 1px 0 #d3deea;
  background: linear-gradient(90deg, #e1ecf6 0%, #dbe5f6 35%, #d9e3f6 70%, #e1ecf6 100%);
`
const Weather = styled.div`
  width: 362px;
  flex: none;
  display: flex;
  align-items: center;
  gap: 10px;
  padding-left: 23px;
`
const WeatherText = styled.div`
  display: flex;
  flex-direction: column;
  gap: 1px;
  font-family: "Open Sans", sans-serif;
  font-size: 12px;
  line-height: 15px;
  letter-spacing: -0.2px;
  strong { font-weight: 400; color: #1a1a1a; }
  span { color: #5c5c5c; }
`
const TaskCenter = styled.div`
  display: flex;
  align-items: center;
`
const SearchBox = styled.div`
  width: 219px;
  height: 30px;
  margin-left: 13px;
  display: flex;
  align-items: center;
  padding: 0 3px 0 10px;
  border: 1px solid #c6d0e4;
  border-radius: 15px;
  background: #f3f6fc;
`
const MirroredSearch = styled(Search)`
  transform: scaleX(-1);
`
const SearchLabel = styled.div`
  flex: 1;
  margin-left: 8px;
  font-family: "Open Sans", sans-serif;
  font-size: 13px;
  color: #555;
`
const TaskIcon = styled.div`
  position: relative;
  width: ${(p) => p.$w}px;
  margin-left: ${(p) => p.$ml}px;
  display: flex;
  justify-content: center;
  ${(p) => p.$dot && `
    &::after {
      content: '';
      position: absolute;
      left: 50%;
      bottom: -9px;
      width: 6px;
      height: 3px;
      margin-left: -3px;
      border-radius: 2px;
      background: #777;
    }
  `}
`
const TaskViewStack = styled.div`
  position: relative;
  width: 24px;
  height: 26px;
`
const TaskViewBack = styled.div`
  position: absolute;
  top: 0;
  right: 0;
  width: 17px;
  height: 17px;
  border-radius: 2px;
  background: #f2f4f8;
  box-shadow: 0 0 2px #bbb;
`
const TaskViewFront = styled.div`
  position: absolute;
  left: 0;
  bottom: 0;
  width: 17px;
  height: 17px;
  border-radius: 1px;
  background: linear-gradient(135deg, #555, #111);
`
const ActiveTile = styled.div`
  position: relative;
  width: 38px;
  height: 40px;
  margin-left: 14px;
  display: flex;
  align-items: center;
  justify-content: center;
  border-radius: 4px;
  background: #eef2fb;
`
const ActiveBar = styled.div`
  position: absolute;
  bottom: 1px;
  left: 11px;
  width: 16px;
  height: 3px;
  border-radius: 2px;
  background: #0a6cc9;
`
const CountBadge = styled.div`
  position: absolute;
  top: -8px;
  right: -5px;
  width: 15px;
  height: 15px;
  display: flex;
  align-items: center;
  justify-content: center;
  border-radius: 50%;
  font-family: "Open Sans", sans-serif;
  font-size: 10px;
  color: #fff;
  background: #0a6cc9;
`
const BTile = styled.div`
  width: 24px;
  height: 24px;
  display: flex;
  align-items: center;
  justify-content: center;
  border-radius: 5px;
  font-size: 17px;
  font-weight: 800;
  color: #1fe0e0;
  background: #0c0c0c;
`
const Tray = styled.div`
  display: flex;
  align-items: center;
  margin-left: auto;
  padding-right: 20px;
`
const TrayIcon = styled.div`
  margin-left: ${(p) => p.$ml}px;
  display: flex;
`
const Clock = styled.div`
  width: 65px;
  display: flex;
  flex-direction: column;
  align-items: flex-end;
  font-family: "Open Sans", sans-serif;
  font-size: 12.500px;
  letter-spacing: -0.1px;
  line-height: 16px;
  color: #1a1a1a;
`
const NotifyBadge = styled.div`
  width: 16px;
  height: 16px;
  margin-left: 7px;
  display: flex;
  align-items: center;
  justify-content: center;
  border-radius: 50%;
  font-family: "Open Sans", sans-serif;
  font-size: 10px;
  color: #fff;
  background: #0a78d4;
`
